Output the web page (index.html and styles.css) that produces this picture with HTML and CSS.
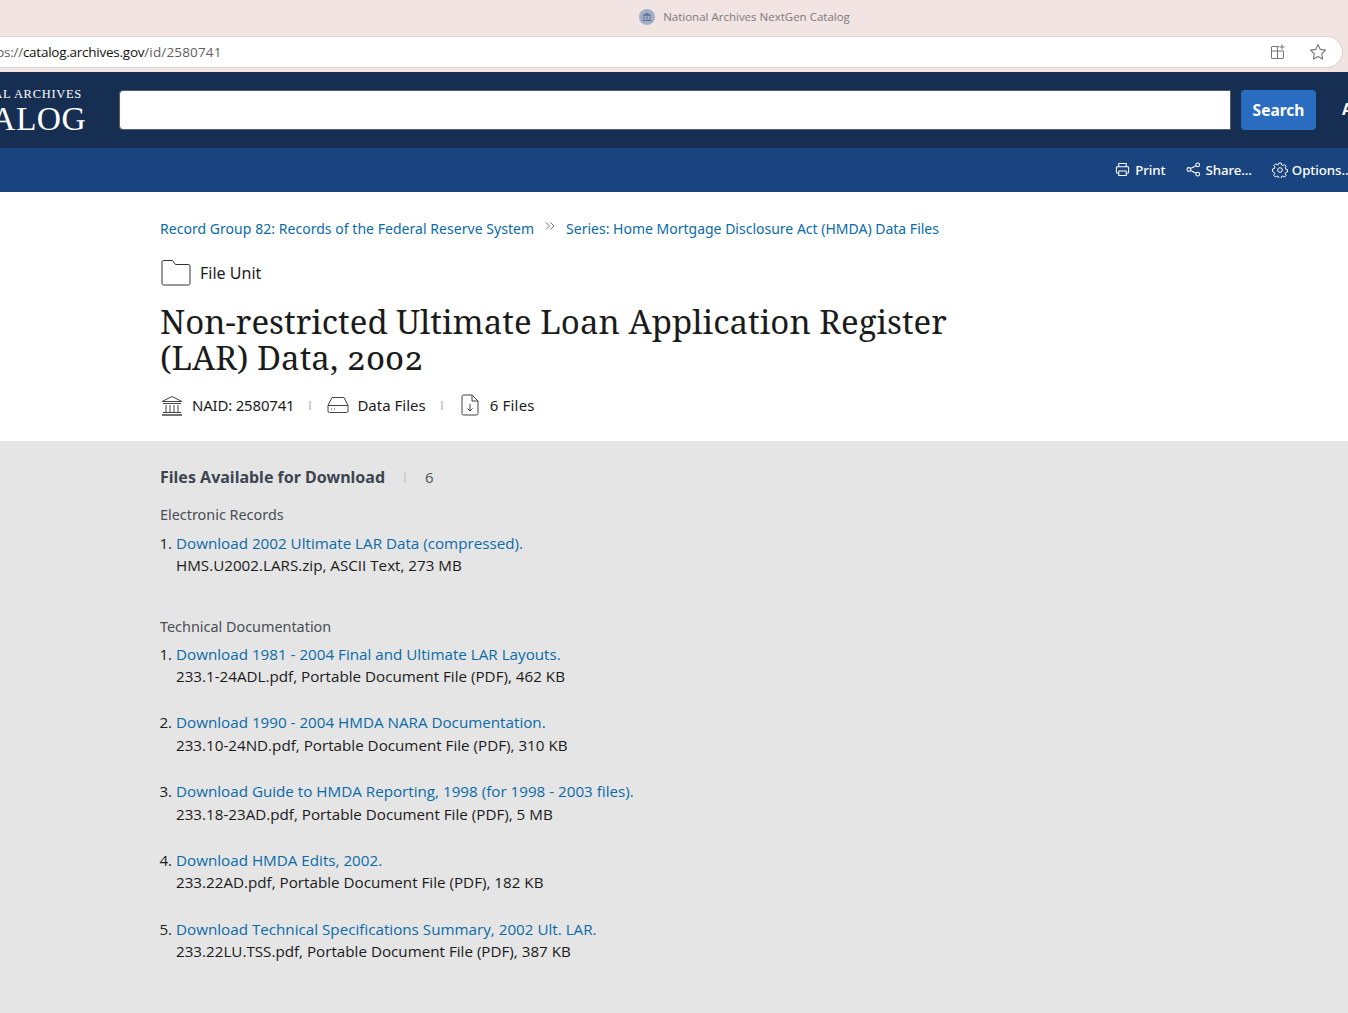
FILE: index.html
```html
<!DOCTYPE html>
<html lang="en">
<head>
<meta charset="utf-8">
<title>National Archives NextGen Catalog</title>
<link rel="stylesheet" href="styles.css">
</head>
<body>
<div class="chrome">
  <div class="titlebar">
    <svg class="tab-icon" viewBox="0 0 16 16" width="16" height="16"><circle cx="8" cy="8" r="8" fill="#a3afc6"/><path d="M3.5 6.2 8 3.8l4.500 2.400v.6h-9zM4.500 7.500h1v3h-1zM7.500 7.500h1v3h-1zM10.500 7.500h1v3h-1zM3.500 11h9v1h-9z" fill="#5f6f92"/></svg>
    <span class="tab-title">National Archives NextGen Catalog</span>
  </div>
  <div class="urlbar">
    <span class="url"><span class="dim">ps://</span><span class="host">catalog.archives.gov</span><span class="dim path">/id/2580741</span></span>
    <svg class="url-icon" viewBox="0 0 16 16" width="16" height="16" fill="none" stroke="#777" stroke-width="1"><path d="M9 2.500H2a.5.5 0 0 0-.5.500v11a.5.500 0 0 0 .5.500h11a.5.500 0 0 0 .5-.500V7H1.500M7.500 2.500v12M12 .5v5M9.500 3h5"/></svg>
    <svg class="url-icon star" viewBox="0 0 18 18" width="18" height="18" fill="none" stroke="#777" stroke-width="1.100" stroke-linejoin="round"><path d="M9 1.500l2.300 4.900 5.200.7-3.800 3.700.9 5.300L9 13.500l-4.600 2.600.9-5.300-3.800-3.700 5.200-.7z"/></svg>
  </div>
</div>
<header class="masthead">
  <div class="logo">
    <div class="logo-top">NATIONAL ARCHIVES</div>
    <div class="logo-main">CATALOG</div>
  </div>
  <div class="search-input"></div>
  <button class="search-btn">Search</button>
  <span class="more">A</span>
</header>
<nav class="actions">
  <span class="action">
    <svg viewBox="0 0 16 16" width="15" height="15" fill="none" stroke="#fff" stroke-width="1.100" stroke-linejoin="round"><path d="M4 5V1.500h8V5M4 12H2.500a1 1 0 0 1-1-1V6a1 1 0 0 1 1-1h11a1 1 0 0 1 1 1v5a1 1 0 0 1-1 1H12M4 9.500h8v5H4z"/></svg>
    Print
  </span>
  <span class="action">
    <svg viewBox="0 0 16 16" width="15" height="15" fill="none" stroke="#fff" stroke-width="1.100"><circle cx="3" cy="8" r="2"/><circle cx="12.500" cy="3" r="2"/><circle cx="12.500" cy="13" r="2"/><path d="M4.800 7 10.700 4M4.800 9l5.900 3"/></svg>
    Share...
  </span>
  <span class="action">
    <svg viewBox="0 0 16 16" width="16" height="16" fill="none" stroke="#fff" stroke-width="1"><circle cx="8" cy="8" r="2.300"/><path d="M6.800 1h2.400l.4 1.900 1.300.6 1.700-1 1.600 1.700-1 1.600.6 1.400 1.700.4v2.400l-1.800.4-.6 1.300 1 1.700-1.600 1.600-1.700-1-1.300.6-.4 1.800H6.800l-.4-1.800-1.400-.6-1.600 1-1.700-1.600 1-1.700-.6-1.300L.5 9.400V7l1.800-.4.600-1.400-1-1.600 1.700-1.700 1.600 1 1.400-.6z"/></svg>
    Options...
  </span>
</nav>
<section class="summary">
  <div class="crumbs">
    <a href="#" class="crumb-first">Record Group 82: Records of the Federal Reserve System</a>
    <svg class="sep" viewBox="0 0 10 8" width="10" height="8" fill="none" stroke="#777" stroke-width="1"><path d="M1 .5 4.500 4 1 7.500M5.500.5 9 4 5.500 7.500"/></svg>
    <a href="#">Series: Home Mortgage Disclosure Act (HMDA) Data Files</a>
  </div>
  <div class="kind">
    <svg viewBox="0 0 30 27" width="30" height="27" fill="none" stroke="#333" stroke-width="1"><path d="M2.500 1.500h9l3 4h13a1.500 1.500 0 0 1 1.500 1.500v17.500a1.500 1.500 0 0 1-1.500 1.500h-25A1.500 1.500 0 0 1 1 24.500V3a1.500 1.500 0 0 1 1.500-1.500z"/></svg>
    <span>File Unit</span>
  </div>
  <h1>Non-restricted Ultimate Loan Application Register (LAR) Data, 2002</h1>
  <div class="meta">
    <span class="meta-item">
      <svg viewBox="0 0 22 21" width="22" height="21" fill="none" stroke="#444" stroke-width="1"><path d="M1 6.500 11 1.500l10 5zM2 8.500h18M5 10v7M9 10v7M13 10v7M17 10v7M2 17.500h18"/><path d="M1 20h20" stroke-width="1.500"/></svg>
      <span class="naid">NAID: 2580741</span>
    </span>
    <span class="bar"></span>
    <span class="meta-item drive">
      <svg viewBox="0 0 22 18" width="22" height="18" fill="none" stroke="#444" stroke-width="1"><path d="M5 1.500h12l4 8v5.500a1.500 1.500 0 0 1-1.500 1.500h-17A1.500 1.500 0 0 1 1 15V9.500zM1 9.500h20M4 13h1M7 13h1"/></svg>
      Data Files
    </span>
    <span class="bar"></span>
    <span class="meta-item file-count">
      <svg viewBox="0 0 18 22" width="18" height="22" fill="none" stroke="#444" stroke-width="1"><path d="M2.500 1h8.500l6 6v12.500a1.500 1.500 0 0 1-1.500 1.500h-13A1.500 1.500 0 0 1 1 19.500v-17A1.500 1.500 0 0 1 2.500 1zM11 1v6h6M9 10v7M6.500 14.500 9 17l2.500-2.500"/></svg>
      6 Files
    </span>
  </div>
</section>
<main class="files">
  <div class="files-head"><strong>Files Available for Download</strong><span class="bar head-bar"></span><span class="count">6</span></div>
  <div class="group-title first">Electronic Records</div>
  <ol class="dl dl-first">
    <li><a href="#">Download 2002 Ultimate LAR Data (compressed).</a><br>HMS.U2002.LARS.zip, ASCII Text, 273 MB</li>
  </ol>
  <div class="group-title second">Technical Documentation</div>
  <ol class="dl dl-second">
    <li><a href="#">Download 1981 - 2004 Final and Ultimate LAR Layouts.</a><br>233.1-24ADL.pdf, Portable Document File (PDF), 462 KB</li>
    <li><a href="#">Download 1990 - 2004 HMDA NARA Documentation.</a><br>233.10-24ND.pdf, Portable Document File (PDF), 310 KB</li>
    <li><a href="#">Download Guide to HMDA Reporting, 1998 (for 1998 - 2003 files).</a><br>233.18-23AD.pdf, Portable Document File (PDF), 5 MB</li>
    <li><a href="#">Download HMDA Edits, 2002.</a><br>233.22AD.pdf, Portable Document File (PDF), 182 KB</li>
    <li><a href="#">Download Technical Specifications Summary, 2002 Ult. LAR.</a><br>233.22LU.TSS.pdf, Portable Document File (PDF), 387 KB</li>
  </ol>
</main>
</body>
</html>
```
FILE: styles.css
```css
* { box-sizing: border-box; }
html, body { margin: 0; height: 100%; }
body { width: 1348px; height: 1013px; overflow: hidden; background: #e5e5e5; font-family: "Noto Sans", sans-serif; color: #1b1b1b; }
a { color: #0a6ba8; text-decoration: none; }

.chrome { background: #f1e4e3; height: 72px; }
.titlebar { height: 36px; display: flex; align-items: center; justify-content: center; gap: 8px; padding-left: 141px; padding-bottom: 3px; }
.tab-title { font-family: "Open Sans", sans-serif; font-size: 11.500px; color: #7e7a7c; }
.urlbar { height: 32px; width: 1343px; background: #fff; border: 1px solid #d8d2d2; border-left: 0; border-radius: 0 16px 16px 0; display: flex; align-items: center; padding-right: 15px; }
.url { font-family: "Open Sans", sans-serif; font-size: 13.500px; letter-spacing: -.25px; color: #111; flex: 1; margin-left: -4px; padding-bottom: 1px; }
.url .dim { color: #5f5f5f; }
.url .path { letter-spacing: .15px; }
.url-icon { margin-left: 24px; }
.url-icon.star { margin-left: 23px; }

.masthead { height: 76px; background: #162e51; display: flex; align-items: flex-start; padding-top: 18px; overflow: hidden; }
.logo { width: 86px; flex: none; display: flex; flex-direction: column; align-items: flex-end; color: #fff; font-family: "Liberation Serif", serif; overflow: hidden; white-space: nowrap; }
.logo-top { font-size: 12.500px; letter-spacing: .7px; line-height: 14px; margin: -3px 4px 0 0; }
.logo-main { font-size: 33.500px; line-height: 36px; letter-spacing: .4px; }
.search-input { margin-left: 33px; width: 1112px; height: 39.500px; background: #fff; border: 1px solid #565c65; border-radius: 4px 0 0 4px; flex: none; }
.search-btn { margin-left: 10px; width: 75px; height: 40px; background: #2a6cc0; color: #fff; border: 0; border-radius: 4px; font-family: "Noto Sans", sans-serif; font-weight: 700; font-size: 15.500px; padding: 0; flex: none; }
.more { margin-left: 26px; line-height: 38px; color: #fff; font-weight: 700; font-size: 16px; }

.actions { height: 44px; background: #1a4480; display: flex; justify-content: flex-end; align-items: center; gap: 20px; padding-bottom: 1px; color: #fff; font-size: 13.300px; font-weight: 500; letter-spacing: -.1px; overflow: hidden; white-space: nowrap; }
.action { display: inline-flex; align-items: center; gap: 5px; }
.action:last-child { margin-right: -4px; gap: 4px; }

.summary { height: 249px; background: #fff; padding: 27px 0 0 160px; }
.crumbs { font-size: 14px; line-height: 20px; display: flex; gap: 11px; }
.crumb-first { letter-spacing: .04px; }
.crumbs .sep { flex: none; margin-top: 3px; }
.kind { display: flex; align-items: center; gap: 9px; margin: 20px 0 0 1px; font-size: 16px; letter-spacing: .02px; }
h1 { width: 800px; margin: 18px 0 0; font-family: "Noto Serif", "DejaVu Serif", "Liberation Serif", serif; font-weight: 400; font-size: 33px; letter-spacing: .03px; line-height: 36px; color: #1b1b1b; font-variant-numeric: oldstyle-nums; }
.meta { display: flex; align-items: center; margin: 18px 0 0 1px; font-size: 15px; }
.meta-item { display: inline-flex; align-items: center; gap: 9px; }
.naid { letter-spacing: -.2px; }
.drive { gap: 8px; margin-left: 1px; }
.file-count { gap: 11px; margin-left: 3px; letter-spacing: .2px; }
.bar { display: inline-block; width: 2px; height: 9px; background: #d0d0d0; margin: 0 15px; }

.files { padding: 25px 0 0 160px; font-family: "Open Sans", "Noto Sans", sans-serif; font-size: 15.200px; }
.files-head { font-family: "Noto Sans", sans-serif; display: flex; align-items: center; font-size: 16px; line-height: 22px; color: #3d4551; }
.head-bar { margin: 0 19px; height: 11px; }
.count { font-size: 15px; color: #565c65; }
.group-title { font-family: "Noto Sans", sans-serif; font-size: 14.400px; line-height: 20px; color: #4a4d55; }
.group-title.first { margin-top: 17px; }
.group-title.second { margin-top: 40.300px; }
.dl { padding: 0 0 0 16px; line-height: 22.500px; color: #1b1b1b; }
.dl-first { margin: 6.700px 0 0; }
.dl-second { margin: 5.600px 0 0; }
.dl li { margin-bottom: 23.750px; }
```
